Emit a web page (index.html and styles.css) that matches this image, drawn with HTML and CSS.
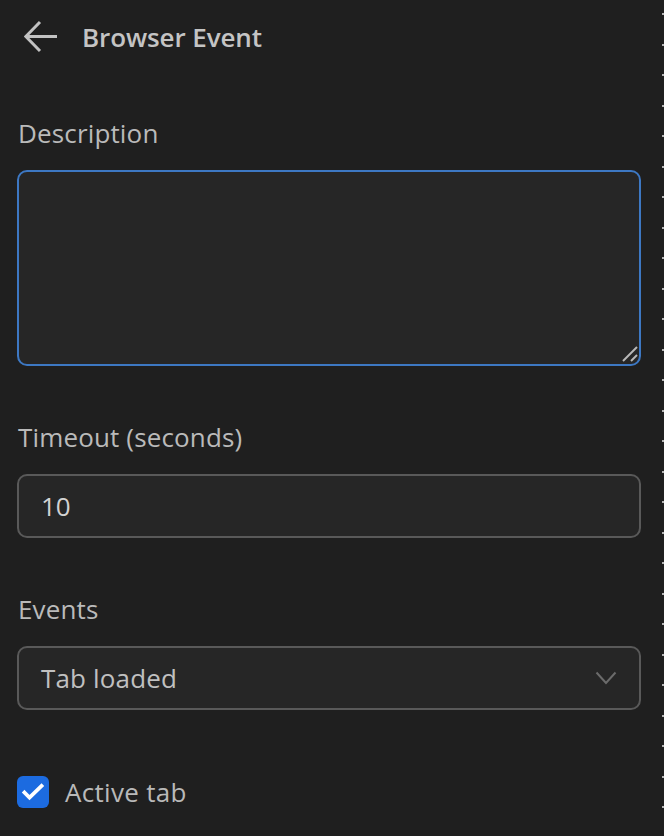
FILE: index.html
```html
<!DOCTYPE html>
<html lang="en">
<head>
<meta charset="utf-8">
<title>Browser Event</title>
<link rel="stylesheet" href="styles.css">
</head>
<body>
<div class="layout">
  <main class="panel">
    <header class="header">
      <button class="back" aria-label="Back">
        <svg width="34" height="34" viewBox="0 0 34 34" fill="none" stroke="#c2c2c2" stroke-width="3" stroke-linecap="butt">
          <path d="M33 16.5 H3"/>
          <path d="M16 2 L1.8 16.5 L16 31"/>
        </svg>
      </button>
      <h1 class="title">Browser Event</h1>
    </header>

    <section class="field field-first">
      <label class="label" for="desc">Description</label>
      <div class="textarea-wrap">
        <textarea id="desc" class="textarea"></textarea>
        <svg class="grip" width="16" height="16" viewBox="0 0 16 16" stroke="#b8b8b8" stroke-width="2">
          <path d="M1 15 L15 1"/>
          <path d="M9 15 L15 9"/>
        </svg>
      </div>
    </section>

    <section class="field">
      <label class="label" for="timeout">Timeout (seconds)</label>
      <div class="input">10</div>
    </section>

    <section class="field">
      <label class="label">Events</label>
      <div class="select">
        <span>Tab loaded</span>
        <svg class="chev" width="22" height="14" viewBox="0 0 22 14" fill="none" stroke="#6b6b6b" stroke-width="2">
          <path d="M1.5 1.5 L11 12 L20.5 1.5"/>
        </svg>
      </div>
    </section>

    <div class="check-row">
      <span class="checkbox">
        <svg width="32" height="32" viewBox="0 0 32 32" fill="none" stroke="#ffffff" stroke-width="3.8" stroke-linecap="square">
          <path d="M7.5 16.5 L12.5 21.5 L24.5 10"/>
        </svg>
      </span>
      <span class="check-label">Active tab</span>
    </div>
  </main>
  <div class="divider"></div>
</div>
</body>
</html>
```

FILE: styles.css
```css
* { box-sizing: border-box; }
html, body {
  margin: 0;
  padding: 0;
  background: #1f1f1f;
  height: 100%;
}
body {
  font-family: "Open Sans", "Noto Sans", sans-serif;
  color: #bdbdbd;
  overflow: hidden;
}
.layout {
  display: flex;
  height: 836px;
  width: 664px;
}
.panel {
  flex: 1;
  padding: 0 21px 0 17px;
}
.divider {
  width: 2px;
  background-image: repeating-linear-gradient(to bottom, transparent 0, transparent 13px, #b4b4b4 13px, #b4b4b4 15px, transparent 15px, transparent 30.5px);
}
.header {
  height: 74px;
  display: flex;
  align-items: center;
}
.back {
  background: none;
  border: 0;
  padding: 0;
  margin: 0 0 0 7px;
  width: 34px;
  height: 34px;
  display: flex;
}
.title {
  margin: 0 0 0 24px;
  font-size: 26px;
  font-weight: 600;
  color: #c4c4c4;
  line-height: 36px;
  letter-spacing: -0.1px;
}
.field { display: flex; flex-direction: column; }
.field-first { margin-top: 41px; }
.field + .field { margin-top: 53px; }
.label {
  font-size: 26px;
  line-height: 36px;
  margin: 0 0 19px 1px;
  color: #bababa;
  letter-spacing: 0.15px;
}
.textarea-wrap {
  position: relative;
  height: 196px;
}
.textarea {
  display: block;
  width: 100%;
  height: 100%;
  resize: none;
  background: #262626;
  border: 2px solid #3d78c3;
  border-radius: 10px;
  outline: none;
  font: inherit;
  color: #d0d0d0;
  padding: 12px 22px;
}
.grip {
  position: absolute;
  right: 3px;
  bottom: 4px;
}
.input, .select {
  height: 64px;
  background: #262626;
  border: 2px solid #595959;
  border-radius: 10px;
  display: flex;
  align-items: center;
  padding: 0 22px;
  font-size: 26px;
  color: #d2d2d2;
}
.select {
  justify-content: space-between;
  color: #c0c0c0;
  letter-spacing: 0.15px;
}
.check-row {
  margin-top: 64px;
  display: flex;
  align-items: center;
  gap: 16px;
}
.checkbox {
  width: 32px;
  height: 32px;
  border-radius: 6px;
  background: #1c6be0;
  display: flex;
}
.check-label {
  font-size: 26px;
  line-height: 36px;
  color: #b9b9b9;
  letter-spacing: 0.3px;
}
```
